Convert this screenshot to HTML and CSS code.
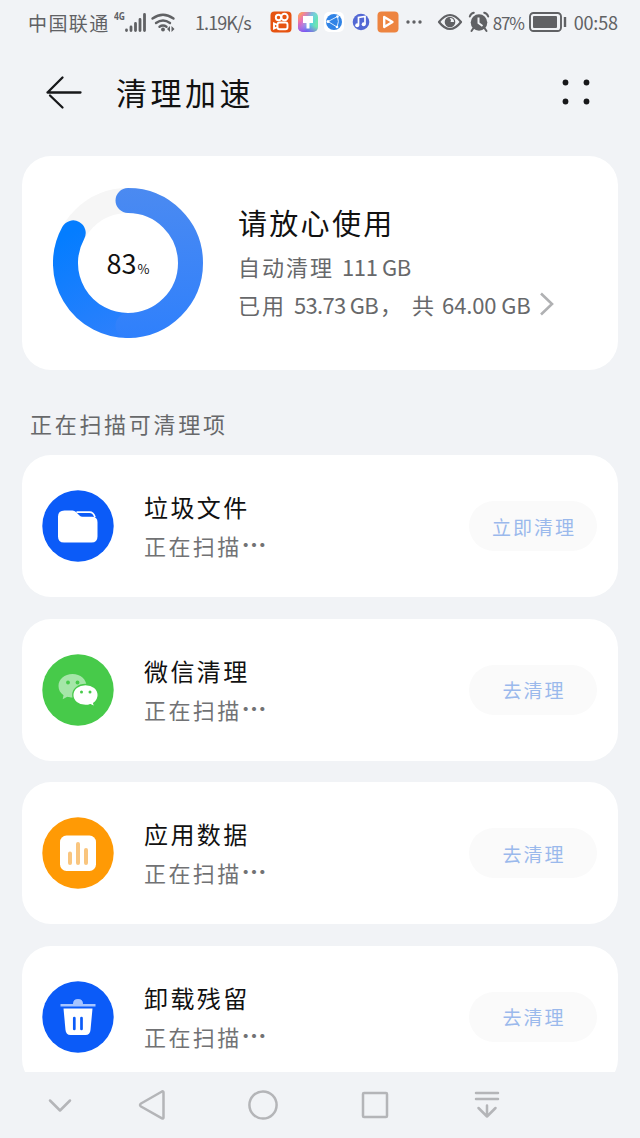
FILE: index.html
```html
<!DOCTYPE html>
<html lang="zh-CN">
<head>
<meta charset="utf-8">
<title>清理加速</title>
<link rel="stylesheet" href="styles.css">
</head>
<body>
<div class="screen">
  <header class="status">
    <span class="carrier">中国联通</span>
    <svg class="signal" width="64" height="28" viewBox="0 0 64 28">
      <text x="0" y="12" class="net" textLength="11" lengthAdjust="spacingAndGlyphs">4G</text>
      <g stroke="#606164" stroke-width="2.8" stroke-linecap="round"><path d="M12.500 22v.5M17 19v3.500M21.500 15.500v7M26 11.500v11M30.500 6.500v16"/></g>
      <g fill="none" stroke="#606164" stroke-width="2.4" stroke-linecap="round"><path d="M38.500 10.500q10.500-7.500 21 0M42 15q7-5 14 0M45.500 18.800q3.500-2.500 7 0"/></g>
      <circle cx="49" cy="21.500" r="1.900" fill="#606164"/>
      <path d="M56 18v6l-3-3zM57.500 18v6l3-3z" fill="#606164"/>
    </svg>
    <span class="speed">1.19K/s</span>
    <div class="apps">
      <svg width="22" height="22" viewBox="0 0 22 22"><rect x=".5" y=".5" width="21" height="21" rx="4" fill="#e65311"/><g fill="none" stroke="#fff" stroke-width="1.900"><circle cx="8.500" cy="6.500" r="2.700"/><circle cx="14.500" cy="6" r="3.200"/><rect x="7.500" y="11.500" width="10" height="6.800" rx="2"/><path d="M7.500 14L4 12.500v5l3.500-1.500"/></g></svg>
      <svg width="22" height="22" viewBox="0 0 22 22"><defs><linearGradient id="theme" x1="0" y1="0" x2="1" y2="0.3"><stop offset="0" stop-color="#ff4fae"/><stop offset=".3" stop-color="#d36be2"/><stop offset=".65" stop-color="#46c9f1"/><stop offset="1" stop-color="#6fe5b1"/></linearGradient><linearGradient id="warm" x1=".7" y1="0" x2=".3" y2="1"><stop offset=".55" stop-color="#8a50f0" stop-opacity="0"/><stop offset="1" stop-color="#7d4bed"/></linearGradient><linearGradient id="sun" x1="0" y1="0" x2=".7" y2=".6"><stop offset="0" stop-color="#ffc928"/><stop offset=".5" stop-color="#ff7a92" stop-opacity=".4"/><stop offset="1" stop-color="#fff" stop-opacity="0"/></linearGradient></defs><rect x="1" y="1" width="20" height="20" rx="5" fill="url(#theme)"/><rect x="1" y="1" width="20" height="20" rx="5" fill="url(#warm)"/><rect x="1" y="1" width="20" height="20" rx="5" fill="url(#sun)"/><path d="M6 5h10v7h-3.500v5.500h-3V12H6z" fill="#fff"/></svg>
      <svg width="22" height="22" viewBox="0 0 22 22"><rect x="1" y="1" width="20" height="20" rx="5" fill="#fff"/><circle cx="11" cy="11" r="8" fill="#3083e6"/><path d="M14.500 5.500L5 10.500l9 5.500M14.500 5.500q2 5-.5 10.500" stroke="#d7eaff" fill="none"/><circle cx="5" cy="10.500" r="1.500" fill="#fff"/><circle cx="14.500" cy="5.500" r="1.300" fill="#fff"/><circle cx="14" cy="16" r="1.300" fill="#fff"/></svg>
      <svg width="22" height="22" viewBox="0 0 22 22"><circle cx="11" cy="11" r="8.300" fill="#5368d4"/><path d="M8.500 14V6.500l6.500-1V13" stroke="#fff" stroke-width="1.700" fill="none"/><circle cx="7.200" cy="14.200" r="2" fill="#fff"/><circle cx="13.700" cy="13.200" r="2" fill="#fff"/></svg>
      <svg width="22" height="22" viewBox="0 0 22 22"><rect x=".5" y=".5" width="21" height="21" rx="4" fill="#ed8440"/><path d="M7.200 16V6L15.500 11z" fill="none" stroke="#fff" stroke-width="2.400" stroke-linejoin="round"/></svg>
    </div>
    <svg class="more" width="18" height="6" viewBox="0 0 18 6" fill="#606164"><circle cx="3" cy="3" r="1.700"/><circle cx="9" cy="3" r="1.700"/><circle cx="15" cy="3" r="1.700"/></svg>
    <svg class="eye" width="26" height="20" viewBox="0 0 26 20"><path d="M2 10Q13-4 24 10Q13 24 2 10z" fill="none" stroke="#606164" stroke-width="2.200" stroke-linejoin="round"/><circle cx="13" cy="10" r="5.300" fill="#606164"/><path d="M13 6a3.500 3.500 0 0 0 0 4h4a4 4 0 0 0-4-4z" fill="#f1f3f6"/><circle cx="12" cy="8.500" r="2" fill="#606164"/></svg>
    <svg class="alarm" width="22" height="22" viewBox="0 0 22 22"><circle cx="11" cy="11.500" r="8.300" fill="#606164"/><path d="M1.800 5.500q1-3 4-3.700M20.200 5.500q-1-3-4-3.700M5.500 17l-2 3M16.500 17l2 3" stroke="#606164" stroke-width="2" fill="none" stroke-linecap="round"/><path d="M10.500 6.500v5.500l4 3" stroke="#f1f3f6" stroke-width="2" fill="none"/></svg>
    <span class="percent">87%</span>
    <svg class="battery" width="38" height="22" viewBox="0 0 38 22"><rect x="1" y="2" width="31" height="18" rx="3.500" fill="none" stroke="#606164" stroke-width="1.900"/><rect x="4" y="5" width="24" height="12" rx="1" fill="#606164"/><path d="M36 6v10" stroke="#606164" stroke-width="2.400"/></svg>
    <span class="clock">00:58</span>
  </header>

  <div class="appbar">
    <svg width="38" height="36" viewBox="0 0 38 36" fill="none" stroke="#17181a" stroke-width="2.300" stroke-linecap="round" stroke-linejoin="round"><path d="M35.500 18.500H2.500M17.500 3.500L2.500 18.500M5 21.500l12.500 12"/></svg>
    <h1>清理加速</h1>
    <svg class="menu" width="30" height="28" viewBox="0 0 30 28" fill="#17181a"><circle cx="4.500" cy="4.500" r="2.900"/><circle cx="25.500" cy="4.500" r="2.900"/><circle cx="4.500" cy="23.500" r="2.900"/><circle cx="25.500" cy="23.500" r="2.900"/></svg>
  </div>

  <main class="content">
    <section class="card summary">
      <div class="ring">
        <svg width="150" height="150" viewBox="0 0 150 150" fill="none">
          <defs>
            <linearGradient id="usage-start" gradientUnits="userSpaceOnUse" x1="75" y1="0" x2="75" y2="150"><stop offset="0" stop-color="#4b8af1"/><stop offset="1" stop-color="#2f80fc"/></linearGradient>
            <linearGradient id="usage-end" gradientUnits="userSpaceOnUse" x1="75" y1="150" x2="15" y2="45"><stop offset="0" stop-color="#2f80fc"/><stop offset="1" stop-color="#047dff"/></linearGradient>
          </defs>
          <circle cx="75" cy="75" r="62.500" stroke="#f6f6f6" stroke-width="25"/>
          <path d="M75 137.500A62.500 62.500 0 0 1 20.200 44.900" stroke="url(#usage-end)" stroke-width="25" stroke-linecap="round"/>
          <path d="M75 12.500A62.500 62.500 0 0 1 75 137.500" stroke="url(#usage-start)" stroke-width="25" stroke-linecap="round"/>
        </svg>
        <div class="ring-value"><span>83</span><small>%</small></div>
      </div>
      <div class="summary-text">
        <h2>请放心使用</h2>
        <p><span class="han">自动清理</span><span class="freed">111 GB</span></p>
        <p><span class="han">已用</span><span class="used">53.73 GB</span><span class="comma">，</span><span class="total-label">共</span><span class="total">64.00 GB</span><svg class="chevron" width="16" height="26" viewBox="0 0 16 26" fill="none" stroke="#b0b1b3" stroke-width="2.600"><path d="M2 2.500L13 13 2 23.500"/></svg></p>
      </div>
    </section>

    <h3 class="section-title">正在扫描可清理项</h3>

    <div class="list">
      <section class="card item">
        <svg class="icon" viewBox="0 0 72 72"><circle cx="36" cy="36" r="35.700" fill="#0b5bf8"/><path d="M22.500 20.500h8q2 0 3.500 1.500l3.500 3.500q1.200 1.200 3 1.200h9.500q5.500 0 5.500 5.500v14.300q0 6-6 6h-27.500q-6 0-6-6V26.500q0-6 6.500-6z" fill="#fff"/><path d="M34.500 22.200h13q4 0 5.500 5" fill="none" stroke="#fff" stroke-width="1.700"/></svg>
        <div class="item-text"><h4>垃圾文件</h4><p>正在扫描<span class="dots">⋯</span></p></div>
        <button>立即清理</button>
      </section>
      <section class="card item">
        <svg class="icon" viewBox="0 0 72 72"><circle cx="36" cy="36" r="35.700" fill="#47ca4a"/><path d="M30.500 20c-8 0-14 5.200-14 12 0 3.800 1.800 7 5 9.200l-.8 4 4.600-2.500c1.700.6 3.200.8 5.200.8 8 0 14-5 14-11.500S38.500 20 30.500 20z" fill="#a5e6a8"/><path d="M43.500 30.500c-7.200 0-12.700 4.700-12.700 10.500s5.500 10.500 12.700 10.500c1.800 0 3.500-.3 5-.9l4.200 2.200-1-3.500c2.800-2 4.500-5 4.500-8.300 0-5.800-5.500-10.500-12.700-10.500z" fill="#fff" stroke="#47ca4a" stroke-width="1.300"/><g fill="#47ca4a"><circle cx="26" cy="28.500" r="1.900"/><circle cx="35.500" cy="28.500" r="1.900"/><circle cx="39.500" cy="38" r="1.500"/><circle cx="48" cy="38" r="1.500"/></g></svg>
        <div class="item-text"><h4>微信清理</h4><p>正在扫描<span class="dots">⋯</span></p></div>
        <button>去清理</button>
      </section>
      <section class="card item">
        <svg class="icon" viewBox="0 0 72 72"><circle cx="36" cy="36" r="35.700" fill="#ff9a05"/><rect x="18" y="18.500" width="36" height="35.500" rx="6.500" fill="#fff"/><path d="M28 36.500V46M36 27v19M44 33v13" stroke="#f9c57e" stroke-width="4" stroke-linecap="round"/></svg>
        <div class="item-text"><h4>应用数据</h4><p>正在扫描<span class="dots">⋯</span></p></div>
        <button>去清理</button>
      </section>
      <section class="card item">
        <svg class="icon" viewBox="0 0 72 72"><circle cx="36" cy="36" r="35.700" fill="#0b5bf8"/><path d="M31 23q0-5 5-5t5 5h12.500v2.600h-35V23z" fill="#a7c5ff"/><path d="M21.500 27.500h29l-2 21.500q-.5 5-5 5h-15q-4.500 0-5-5z" fill="#fff"/><path d="M32.300 37v11M39.500 37v11" stroke="#0b5bf8" stroke-width="2.700" stroke-linecap="round"/></svg>
        <div class="item-text"><h4>卸载残留</h4><p>正在扫描<span class="dots">⋯</span></p></div>
        <button>去清理</button>
      </section>
    </div>
  </main>

  <nav class="nav">
    <svg width="24" height="15" viewBox="0 0 24 15"><path d="M2 2.500L12 12.500 22 2.500"/></svg>
    <svg width="28" height="32" viewBox="0 0 28 32"><path d="M25.500 3.500v25q0 1.500-1.500.8L3 17.500q-2-1.500 0-3L24 2.500q1.500-.5 1.500 1z"/></svg>
    <svg width="32" height="32" viewBox="0 0 32 32"><circle cx="16" cy="16" r="13.600"/></svg>
    <svg width="28" height="28" viewBox="0 0 28 28"><rect x="2" y="2" width="24" height="24" rx="1"/></svg>
    <svg width="26" height="30" viewBox="0 0 26 30"><path d="M2 3h22M2 9h22M13 15.500v11M4.500 18l8.500 8.500 8.500-8.500"/></svg>
  </nav>
</div>
</body>
</html>
```

FILE: styles.css
```css
* { box-sizing: border-box; margin: 0; padding: 0; }
body {
  background: #f1f3f6;
  color: #111;
  font-family: "Noto Sans CJK SC", "Noto Sans", sans-serif;
  overflow: hidden;
}
h1, h2, h3, h4 { font-weight: 400; white-space: nowrap; }
svg { flex: none; display: block; }
.screen { width: 640px; height: 1138px; display: flex; flex-direction: column; overflow: hidden; }

.status { height: 44px; flex: none; display: flex; align-items: center; padding-left: 28px; color: #606164; font-size: 19px; white-space: nowrap; }
.carrier { width: 86px; letter-spacing: 1.4px; }
.signal { width: 64px; }
.net { font: 700 10px "Open Sans", sans-serif; fill: #606164; }
.speed { width: 75px; margin-left: 17px; font-size: 18px; letter-spacing: -.9px; }
.apps { display: flex; gap: 4.700px; }
.more { margin-left: 6px; }
.eye { margin-left: 14px; }
.alarm { margin-left: 5px; }
.percent { width: 35px; margin-left: 3px; font-size: 17px; letter-spacing: -1.200px; }
.battery { margin-left: 1px; }
.clock { margin-left: 7px; font-size: 18px; letter-spacing: -.2px; }

.appbar { height: 112px; flex: none; display: flex; align-items: center; padding: 0 49px 16px 45px; }
.appbar h1 { margin-left: 33px; font-size: 31px; line-height: 44px; letter-spacing: 3.500px; }
.menu { margin-left: auto; }

.content { flex: 1; min-height: 0; overflow: hidden; padding: 0 22px; }
.card { background: #fff; border-radius: 29px; }
.summary { height: 214px; display: flex; padding-left: 31px; }
.ring { display: grid; width: 150px; height: 150px; margin-top: 32px; }
.ring > * { grid-area: 1 / 1; }
.ring-value { display: flex; justify-content: center; align-items: baseline; align-self: center; padding-top: 6px; font-size: 27px; line-height: 40px; color: #111; }
.ring-value small { font-size: 13px; margin-left: 1px; }
.summary-text { margin: 45px 0 0 35px; }
.summary h2 { font-size: 29px; line-height: 42px; letter-spacing: 2.300px; color: #111; }
.summary p { display: flex; align-items: center; height: 38px; font-size: 22px; color: #67686a; white-space: nowrap; }
.summary p:first-of-type { margin-top: 4px; }
.han { letter-spacing: 2px; margin-right: 8px; }
.freed { letter-spacing: -.4px; }
.used { width: 86px; letter-spacing: -.700px; }
.comma { width: 32px; }
.total-label { width: 30px; }
.total { width: 91px; letter-spacing: -.1px; }
.chevron { margin-left: 6px; }

.section-title { height: 85px; padding: 37px 0 0 8px; font-size: 22px; line-height: 32px; letter-spacing: 2.700px; color: #67686a; }
.list { display: flex; flex-direction: column; gap: 21.600px; }
.item { height: 142px; flex: none; display: flex; align-items: center; padding: 0 21px 0 20px; }
.icon { width: 72px; height: 72px; }
.item-text { margin-left: 30px; }
.item h4 { font-size: 24px; line-height: 38px; letter-spacing: 2.400px; color: #111; }
.item p { font-size: 22px; line-height: 38px; letter-spacing: 2.400px; color: #717274; white-space: nowrap; }
.dots { font-size: 25px; font-weight: 700; line-height: 1; letter-spacing: 0; }
.item button { width: 128px; height: 50px; margin-left: auto; border: 0; border-radius: 25px; background: #fafafa; color: #9ab9ec; font-family: inherit; font-size: 19px; letter-spacing: 2px; text-indent: 2px; }

.nav { height: 66px; flex: none; display: grid; grid-template-columns: 24px 28px 32px 28px 26px; justify-content: start; align-items: center; padding-left: 48px; column-gap: 84px; background: #f1f3f6; }
.nav svg { fill: none; stroke: #b4b5b8; stroke-width: 2.500; stroke-linecap: round; stroke-linejoin: round; }
.nav svg:nth-child(2) { margin-left: -18px; }
.nav svg:nth-child(3) { margin-left: -21px; }
.nav svg:nth-child(4) { margin-left: -23px; }
.nav svg:nth-child(5) { margin-left: -22px; }
```
